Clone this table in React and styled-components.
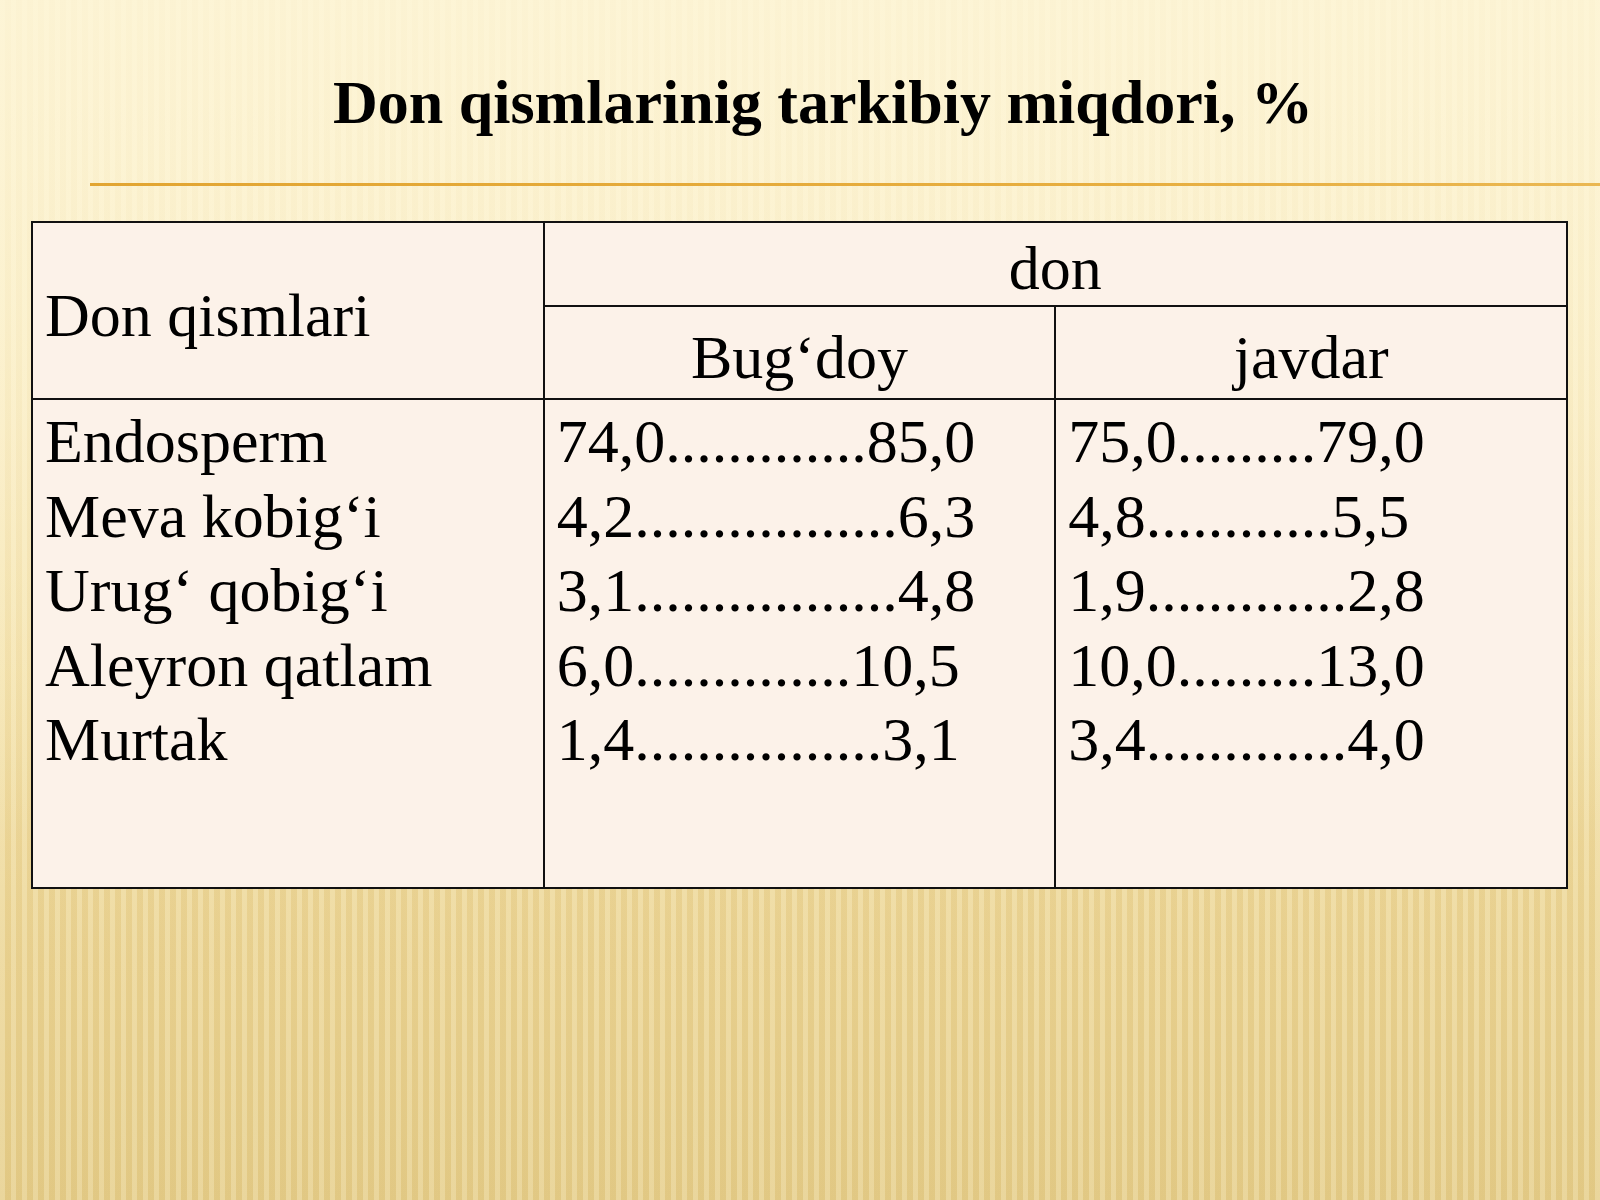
import React from "react";
import styled, { createGlobalStyle } from "styled-components";

const GlobalStyle = createGlobalStyle`
  html, body {
    margin: 0;
    padding: 0;
  }
  body {
    font-family: "Liberation Serif", "Times New Roman", serif;
    color: #000;
  }
`;

const Slide = styled.div`
  width: 1600px;
  height: 1200px;
  overflow: hidden;
  box-sizing: border-box;
  padding-top: 71px;
  background:
    linear-gradient(
      to bottom,
      rgba(253, 245, 215, 0.8) 0%,
      rgba(253, 245, 215, 0.45) 35%,
      rgba(253, 245, 215, 0) 70%
    ),
    repeating-linear-gradient(
      90deg,
      rgba(255, 250, 225, 0.22) 0px,
      rgba(255, 250, 225, 0.22) 5px,
      rgba(190, 150, 60, 0.07) 5px,
      rgba(190, 150, 60, 0.07) 11px
    ),
    linear-gradient(
      to bottom,
      #fcf1cc 0%,
      #f9ebc0 25%,
      #f3e0a8 55%,
      #ead393 80%,
      #e4cc89 100%
    );
`;

const Title = styled.h1`
  margin: 0;
  padding-left: 46px;
  font-family: "Liberation Serif", "Times New Roman", serif;
  font-weight: bold;
  font-size: 62px;
  line-height: 62px;
  text-align: center;
`;

const Rule = styled.div`
  margin: 50px 0 0 90px;
  height: 3px;
  background: linear-gradient(to right, #e2a532, #e7ae40 70%, #eab752);
`;

const Table = styled.div`
  margin: 35px 0 0 31px;
  width: 1537px;
  box-sizing: border-box;
  display: grid;
  grid-template-columns: 1fr 1fr 1fr;
  grid-template-rows: 82px 91px 487px;
  gap: 2px;
  border: 2px solid #111;
  background: #111;
`;

const Cell = styled.div`
  background: #fcf2e9;
  padding: ${(p) => p.$pad || "0"} 12px 0;
  font-size: 62px;
  line-height: ${(p) => p.$lh || "70px"};
  text-align: ${(p) => (p.$center ? "center" : "left")};
  white-space: nowrap;
  grid-column: ${(p) => p.$col || "auto"};
  grid-row: ${(p) => p.$row || "auto"};
`;

const Line = styled.div``;

const parts = [
  "Endosperm",
  "Meva kobig‘i",
  "Urug‘ qobig‘i",
  "Aleyron qatlam",
  "Murtak",
];

const wheat = [
  "74,0.............85,0",
  "4,2.................6,3",
  "3,1.................4,8",
  "6,0..............10,5",
  "1,4................3,1",
];

const rye = [
  "75,0.........79,0",
  "4,8............5,5",
  "1,9.............2,8",
  "10,0.........13,0",
  "3,4.............4,0",
];

const Column = ({ items }) => (
  <Cell $pad="4px" $lh="74.5px">
    {items.map((t) => (
      <Line key={t}>{t}</Line>
    ))}
  </Cell>
);

export default function App() {
  return (
    <>
      <GlobalStyle />
      <Slide>
        <Title>Don qismlarinig tarkibiy miqdori, %</Title>
        <Rule />
        <Table>
          <Cell $row="1 / span 2" $col="1" $pad="57px">
            Don qismlari
          </Cell>
          <Cell $col="2 / span 2" $center $pad="10px">
            don
          </Cell>
          <Cell $center $pad="15px">
            Bug‘doy
          </Cell>
          <Cell $center $pad="15px">
            javdar
          </Cell>
          <Column items={parts} />
          <Column items={wheat} />
          <Column items={rye} />
        </Table>
      </Slide>
    </>
  );
}
